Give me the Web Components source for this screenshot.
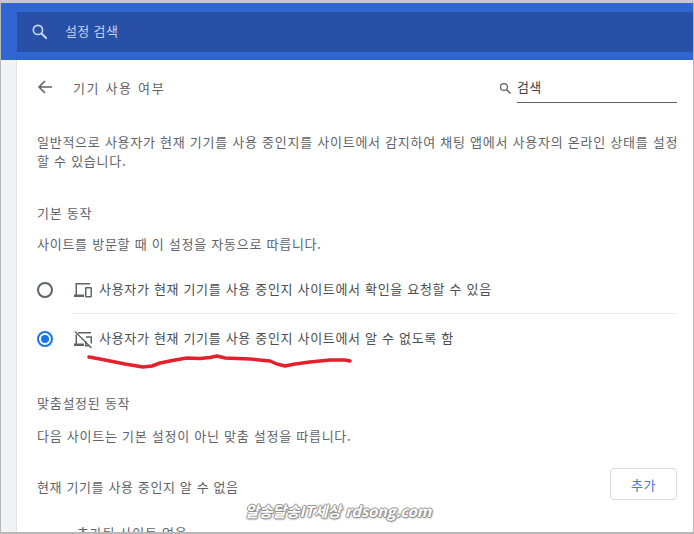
<!DOCTYPE html>
<html lang="ko"><head><meta charset="utf-8"><style>
html,body{margin:0;padding:0;background:#fff}
body{font-family:"Noto Sans CJK KR","Noto Sans",sans-serif;color:#5f6368;width:694px;height:534px;overflow:hidden}
</style></head><body>
<settings-page>
  <settings-header slot="header" placeholder="설정 검색"></settings-header>
  <page-title title-text="기기 사용 여부" search="검색"></page-title>
  <section-text class="p">일반적으로 사용자가 현재 기기를 사용 중인지를 사이트에서 감지하여 채팅 앱에서 사용자의 온라인 상태를 설정<br>할 수 있습니다.</section-text>
  <section-text style="--top:33px">기본 동작</section-text>
  <section-text style="--top:12px">사이트를 방문할 때 이 설정을 자동으로 따릅니다.</section-text>
  <radio-row icon="on" style="--top:12px" divider>사용자가 현재 기기를 사용 중인지 사이트에서 확인을 요청할 수 있음</radio-row>
  <radio-row icon="off" checked>사용자가 현재 기기를 사용 중인지 사이트에서 알 수 없도록 함</radio-row>
  <section-text style="--top:30px">맞춤설정된 동작</section-text>
  <section-text style="--top:14px">다음 사이트는 기본 설정이 아닌 맞춤 설정을 따릅니다.</section-text>
  <add-row label="현재 기기를 사용 중인지 알 수 없음" button="추가"></add-row>
  <section-text style="--top:23px;--left:40px">추가된 사이트 없음</section-text>
</settings-page>
<script>
const SEARCH=c=>`<circle cx="9.500" cy="9.500" r="5.500" fill="none" stroke="${c}" stroke-width="2"/><path d="M13.500 13.500 20 20" fill="none" stroke="${c}" stroke-width="2.400"/>`;
const ICONS={
 on:'<g fill="none" stroke="#5f6368" stroke-width="1.500"><path d="M18 3.750H4.250V15.500"/><rect x="13.750" y="7.750" width="5.500" height="9" rx=".6"/></g><path d="M2 14.500h10V17H2z" fill="#5f6368"/>',
 off:'<g fill="none" stroke="#5f6368" stroke-width="1.500"><path d="M6 3.750H19M4.250 5.500V15.500M14 8h5.250v6.500M13.750 12v4.750h4"/><path d="M3 2.500 19.500 19"/></g><path d="M2 14.500h10V17H2z" fill="#5f6368"/>'
};
function def(name,css,html){
  customElements.define(name,class extends HTMLElement{
    connectedCallback(){
      if(this.shadowRoot)return;
      const s=this.attachShadow({mode:'open'});
      s.innerHTML='<style>'+css+'</style>'+(typeof html==='function'?html(this):html);
    }
  });
}
const TXT='font-size:13px;letter-spacing:.74px;';
def('settings-header',
 `:host{display:block;height:57px;background:#2f66d2;padding:9px 0 8px 16px;box-sizing:border-box}
  .bar{height:40px;background:#2850a6;display:flex;align-items:center;padding-left:13px;color:#c3d3f1;font-size:13px;letter-spacing:.35px}
  .bar span{margin-top:-3px}
  svg{width:20px;height:20px;margin-right:15px;flex:none;margin-top:-1px}`,
 h=>`<div class="bar"><svg viewBox="0 0 24 24">${SEARCH('#c9d8f3')}</svg><span>${h.getAttribute('placeholder')}</span></div>`);
def('page-title',
 `:host{display:flex;align-items:center;height:54px;padding:0 16px 0 20px;font-size:13px;letter-spacing:1.650px;color:#5f6368}
  .back{width:16px;height:16px;margin-right:20px;flex:none}
  .t{flex:1}
  .s{display:flex;align-items:center;align-self:flex-start;margin-top:13px;letter-spacing:.2px}
  .s svg{width:15px;height:15px;margin-right:4px}
  .f{width:160px;height:30px;line-height:28px;border-bottom:1px solid #5f6368;box-sizing:border-box;color:#3c4043;font-size:13px}`,
 h=>`<svg class="back" viewBox="0 0 16 16"><path fill="none" stroke="#5f6368" stroke-width="1.600" d="M15 8H2M8 2 2 8l6 6"/></svg><span class="t">${h.getAttribute('title-text')}</span><div class="s"><svg viewBox="0 0 24 24">${SEARCH('#5f6368')}</svg><div class="f">${h.getAttribute('search')}</div></div>`);
def('section-text',
 `:host{display:block;margin-top:var(--top,0);padding-left:calc(20px + var(--left,0px));padding-right:10px;${TXT}line-height:19px;color:#5f6368;white-space:nowrap}
  :host(.p){margin-top:18px}`,
 '<slot></slot>');
def('radio-row',
 `:host{display:flex;align-items:center;height:49px;margin-top:var(--top,0);margin-right:16px;padding-left:20px;position:relative;font-size:13px;letter-spacing:.68px;color:#4a4d51;white-space:nowrap}
  .r{width:16px;height:16px;border-radius:50%;border:2px solid #5f6368;box-sizing:border-box;margin-right:19px;flex:none;display:flex;align-items:center;justify-content:center}
  :host([checked]) .r{border-color:#1a73e8}
  :host([checked]) .r::after{content:"";width:8px;height:8px;border-radius:50%;background:#1a73e8}
  svg{width:21px;height:21px;margin-right:6px;flex:none;margin-top:1px}
  .line{position:absolute;left:55px;right:0;bottom:0;height:1px;background:#e8eaed}
  :host([checked]) .line{display:none}
  .x{margin-top:-3px}`,
 h=>`<span class="r"></span><svg viewBox="0 0 21 21">${ICONS[h.getAttribute('icon')]}</svg><span class="x"><slot></slot></span><span class="line"></span>`);
def('add-row',
 `:host{display:flex;align-items:center;justify-content:space-between;height:32px;margin-top:23px;margin-right:16px;padding-left:20px;font-size:13px;letter-spacing:.62px;color:#5f6368}
  span{margin-top:5px}
  button{width:67px;height:32px;background:#fff;border:1px solid #dadce0;border-radius:4px;color:#4a78d6;font:inherit;padding:0;letter-spacing:.5px}`,
 h=>`<span>${h.getAttribute('label')}</span><button>${h.getAttribute('button')}</button>`);
def('settings-page',
 `:host{display:block;width:694px;height:534px;box-sizing:border-box;position:relative;overflow:hidden;background:#f1f3f4;border-top:3px solid #c8c8c8;border-left:1px solid #b8b8b8;border-right:1px solid #b8b8b8;border-bottom:2px solid #b8b8b8}
  .card{background:#fff;margin-left:16px;height:calc(100% - 57px);overflow:hidden;box-shadow:0 0 2px rgba(60,64,67,.25)}
  .scribble{position:absolute;left:0;top:0;pointer-events:none}
  .mark{position:absolute;left:244px;top:497px;font:italic 700 15px "Noto Sans CJK KR","Noto Sans",sans-serif;color:#fff;letter-spacing:-.15px;white-space:nowrap;text-shadow:-1px 0 #8f8f8f,1px 0 #8f8f8f,0 -1px #8f8f8f,0 1px #8f8f8f,1px 1px 2px #888}`,
 `<slot name="header"></slot><div class="card"><slot></slot></div>
  <svg class="scribble" width="694" height="534" viewBox="1 3 694 534"><path fill="none" stroke="#e3202c" stroke-width="3.500" stroke-linecap="round" stroke-linejoin="round" d="M89 357 100 359 110 361 125 364 143 367 152 366 160 363 175 360 187 358 200 358.500 210 357.500 217 356 225 358 250 359 270 361 277 364 285 366 295 364 310 362 330 360 345 360 350 361"/></svg>
  <div class="mark">알송달송IT세상 rdsong.com</div>`);
</script>
</body></html>
